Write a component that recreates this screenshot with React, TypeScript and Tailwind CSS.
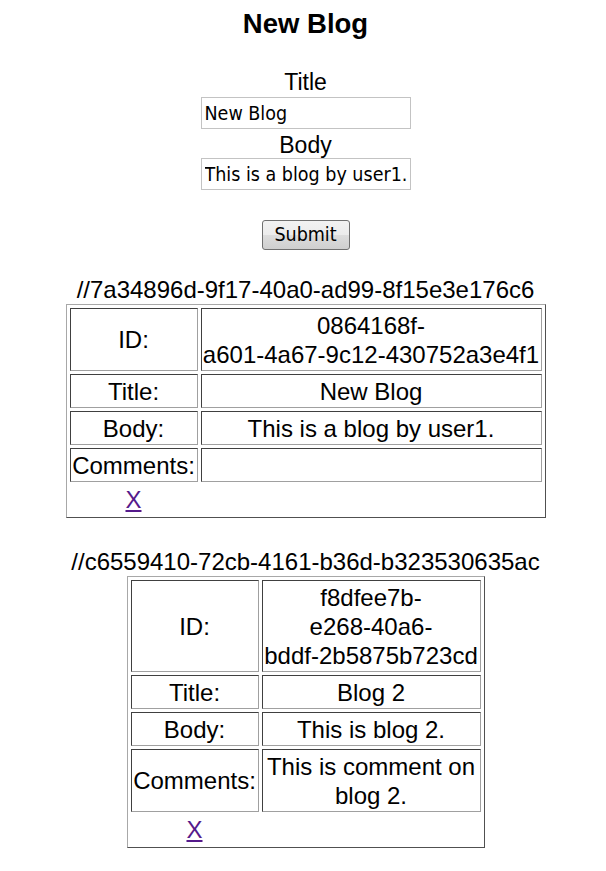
import React from "react";

type Blog = {
  key: string;
  col2: number;
  id: string[];
  title: string;
  body: string;
  comments: string[];
};

const blogs: Blog[] = [
  {
    key: "//7a34896d-9f17-40a0-ad99-8f15e3e176c6",
    col2: 341,
    id: ["0864168f-", "a601-4a67-9c12-430752a3e4f1"],
    title: "New Blog",
    body: "This is a blog by user1.",
    comments: [],
  },
  {
    key: "//c6559410-72cb-4161-b36d-b323530635ac",
    col2: 219,
    id: ["f8dfee7b-", "e268-40a6-", "bddf-2b5875b723cd"],
    title: "Blog 2",
    body: "This is blog 2.",
    comments: ["This is comment on", "blog 2."],
  },
];

function Cell({ lines }: { lines: string[] }) {
  return (
    <div className="flex items-center justify-center text-center border border-t-[#404040] border-l-[#404040] border-b-[#a0a0a0] border-r-[#a0a0a0] py-[1.5px] px-[1px] leading-[29px]">
      <div>
        {lines.length === 0 ? (
          <span>&nbsp;</span>
        ) : (
          lines.map((l, i) => (
            <div key={i} className="whitespace-nowrap">
              {l}
            </div>
          ))
        )}
      </div>
    </div>
  );
}

function BlogTable({ blog, first }: { blog: Blog; first: boolean }) {
  return (
    <>
      <div className={`${first ? "mt-[25px]" : "mt-[29px]"} text-[24px] leading-[29px] whitespace-nowrap`}>
        {blog.key}
      </div>
      <div
        className="grid gap-[3px] p-[3px] border border-t-[#a8a8a8] border-l-[#a8a8a8] border-b-[#505050] border-r-[#505050] text-[24px]"
        style={{ gridTemplateColumns: `128px ${blog.col2}px` }}
      >
        <Cell lines={["ID:"]} />
        <Cell lines={blog.id} />
        <Cell lines={["Title:"]} />
        <Cell lines={[blog.title]} />
        <Cell lines={["Body:"]} />
        <Cell lines={[blog.body]} />
        <Cell lines={["Comments:"]} />
        <Cell lines={blog.comments} />
        <div className="h-[29px] leading-[29px] text-center">
          <a href="#" className="text-[#551a8b] underline">
            X
          </a>
        </div>
        <div />
      </div>
    </>
  );
}

export default function App() {
  const inputBase =
    "w-[210px] h-[32px] border border-[#c3c3c3] bg-white px-[3px] text-[19.5px] text-black font-['DejaVu_Sans_Condensed','DejaVu_Sans',sans-serif] [font-stretch:condensed] outline-none";
  return (
    <div className="min-h-screen bg-white text-black font-['Liberation_Sans',Arial,sans-serif] flex flex-col items-center pl-[5px]">
      <h3 className="mt-[8px] text-[27.5px] leading-[31px] font-bold">New Blog</h3>
      <label className="mt-[30px] text-[23px] leading-[26px]">Title</label>
      <input className={`mt-[2px] ${inputBase}`} defaultValue="New Blog" readOnly />
      <label className="mt-[3px] text-[23px] leading-[26px]">Body</label>
      <input className={`mt-0 ${inputBase}`} defaultValue="This is a blog by user1." readOnly />
      <button
        type="button"
        className="mt-[30px] w-[88px] h-[30px] rounded-[3px] border border-[#707070] bg-[linear-gradient(#f2f2f2,#ebebeb_50%,#dddddd_50%,#cfcfcf)] text-[19.5px] leading-none text-black font-['DejaVu_Sans_Condensed','DejaVu_Sans',sans-serif] [font-stretch:condensed]"
      >
        Submit
      </button>
      {blogs.map((b, i) => (
        <BlogTable key={b.key} blog={b} first={i === 0} />
      ))}
    </div>
  );
}
